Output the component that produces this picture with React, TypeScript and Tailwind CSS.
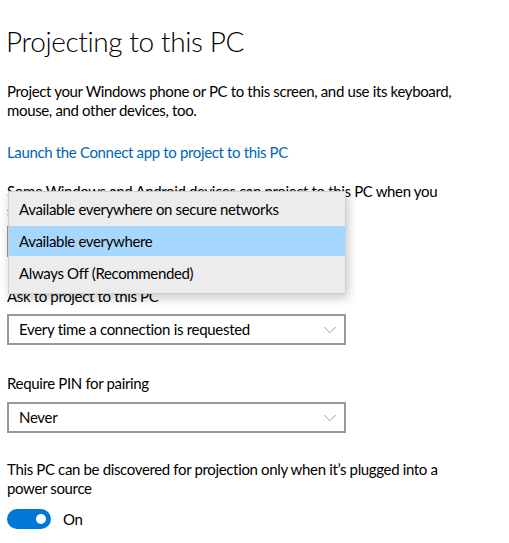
import { ChevronDown } from "lucide-react";

const font = { fontFamily: 'Lato, "Noto Sans", sans-serif' };

function Select({ value }: { value: string }) {
  return (
    <div className="w-[339px] h-[31px] border-2 border-[#999999] bg-white flex items-center justify-between pl-[10px] pr-[3px] text-[15px] tracking-[-0.3px] text-black">
      <span>{value}</span>
      <ChevronDown className="w-[22px] h-[22px] text-[#8a8a8a]" strokeWidth={0.9} />
    </div>
  );
}

export default function App() {
  const options = [
    "Available everywhere on secure networks",
    "Available everywhere",
    "Always Off (Recommended)",
  ];
  return (
    <div className="w-[509px] h-[543px] bg-white overflow-hidden text-black tracking-[-0.35px]" style={font}>
      <div className="pl-[7px] pr-4">
        <h1 className="text-[28px] font-light leading-none tracking-[-0.4px] pt-[27px] pb-[27px] -ml-[1px]">
          Projecting to this PC
        </h1>
        <p className="text-[15px] leading-[19px] w-[449px]">
          Project your Windows phone or PC to this screen, and use its keyboard, mouse, and other devices, too.
        </p>
        <a className="block mt-[23px] text-[15px] leading-[19px] text-[#0066b4]">
          Launch the Connect app to project to this PC
        </a>
        <p className="mt-[20px] text-[15px] leading-[19px] w-[449px]">
          Some Windows and Android devices can project to this PC when you say it's OK
        </p>
        <div className="relative mt-[6px]">
          <Select value="Available everywhere" />
          <div className="absolute left-[1px] top-[-35px] w-[338px] bg-[#ececec] border border-[#cfcfcf] shadow-[2px_4px_10px_rgba(0,0,0,0.22)] pt-[1px] pb-[4px] z-10 text-[15px]">
            {options.map((o, i) => (
              <div
                key={o}
                className={
                  "flex items-center pl-[10px] " + (i === 1 ? "bg-[#a6d8ff] h-[30px] my-[1px]" : "h-[32px]")
                }
              >
                {o}
              </div>
            ))}
          </div>
        </div>
        <div className="mt-[30px] text-[15px] leading-[19px]">Ask to project to this PC</div>
        <div className="mt-[8px]">
          <Select value="Every time a connection is requested" />
        </div>
        <div className="mt-[29px] text-[15px] leading-[19px]">Require PIN for pairing</div>
        <div className="mt-[9px]">
          <Select value="Never" />
        </div>
        <p className="mt-[27px] text-[15px] leading-[19px] w-[449px]">
          This PC can be discovered for projection only when it’s plugged into a power source
        </p>
        <div className="mt-[10px] flex items-center gap-[12px]">
          <div className="w-[44px] h-[20px] rounded-full bg-[#0078d7] flex items-center justify-end pr-[5px]">
            <div className="w-[10px] h-[10px] rounded-full bg-white" />
          </div>
          <span className="text-[15px]">On</span>
        </div>
      </div>
    </div>
  );
}
